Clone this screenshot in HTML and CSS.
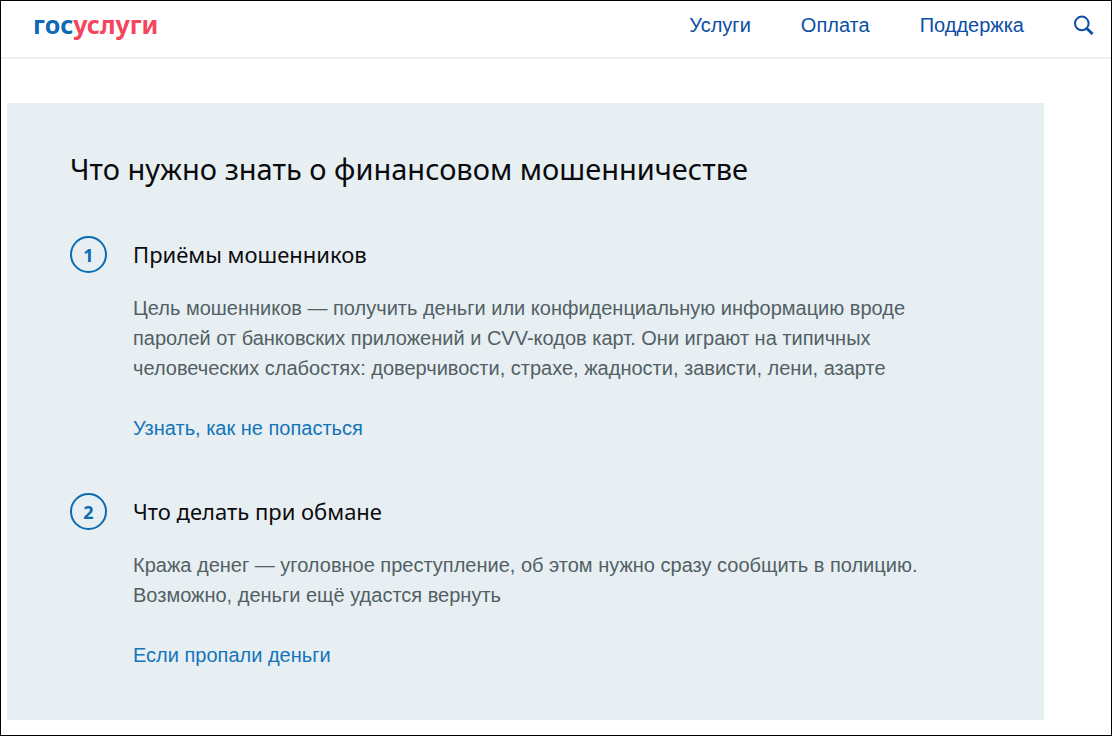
FILE: index.html
```html
<!DOCTYPE html>
<html lang="ru">
<head>
<meta charset="utf-8">
<meta name="viewport" content="width=device-width, initial-scale=1">
<title>Госуслуги</title>
<link rel="stylesheet" href="styles.css">
</head>
<body class="page">
<header class="header">
  <a class="logo" href="#"><span class="logo-blue">гос</span><span class="logo-red">услуги</span></a>
  <nav class="nav">
    <a class="nav-link" href="#">Услуги</a>
    <a class="nav-link" href="#">Оплата</a>
    <a class="nav-link" href="#">Поддержка</a>
    <button class="search" type="button" aria-label="Поиск">
      <svg class="search-icon" viewBox="0 0 20 20" aria-hidden="true"><circle cx="7.8" cy="8.4" r="6.8" fill="none" stroke="currentColor" stroke-width="2"/><path d="M12.6 13.2L18.6 19" fill="none" stroke="currentColor" stroke-width="2.8"/></svg>
    </button>
  </nav>
</header>
<main class="card">
  <h1 class="title">Что нужно знать о финансовом мошенничестве</h1>
  <ol class="steps">
    <li class="step">
      <span class="badge">1</span>
      <div class="content">
        <h2 class="subtitle">Приёмы мошенников</h2>
        <p class="text">Цель мошенников — получить деньги или конфиденциальную информацию вроде паролей от банковских приложений и CVV-кодов карт. Они играют на типичных человеческих слабостях: доверчивости, страхе, жадности, зависти, лени, азарте</p>
        <a class="link" href="#">Узнать, как не попасться</a>
      </div>
    </li>
    <li class="step">
      <span class="badge">2</span>
      <div class="content">
        <h2 class="subtitle">Что делать при обмане</h2>
        <p class="text">Кража денег — уголовное преступление, об этом нужно сразу сообщить в полицию. Возможно, деньги ещё удастся вернуть</p>
        <a class="link" href="#">Если пропали деньги</a>
      </div>
    </li>
  </ol>
</main>
</body>
</html>
```
FILE: styles.css
```css
* { box-sizing: border-box; }

.page {
  margin: 0;
  min-height: 100vh;
  border: 1px solid #000;
  background: #fff;
  font-family: "Liberation Sans", Arial, sans-serif;
  font-size: 20px;
  line-height: 30px;
}

.header {
  display: flex;
  align-items: flex-start;
  justify-content: space-between;
  padding: 9px 17px 17px 32px;
  border-bottom: 2px solid #efeff1;
}

.logo {
  font-family: "Noto Sans", sans-serif;
  font-size: 25px;
  font-weight: 700;
  line-height: 28px;
  text-decoration: none;
}

.logo-blue { color: #0d69b4; }
.logo-red { color: #f5455c; }

.nav {
  display: flex;
  align-items: center;
  gap: 50px;
}

.nav-link {
  color: #0b4ea5;
  text-decoration: none;
}

.search {
  display: flex;
  padding: 0;
  border: 0;
  background: none;
  color: #0b4ea5;
}

.search-icon {
  width: 20px;
  height: 20px;
}

.card {
  margin: 44px 67px 15px 6px;
  padding: 44px 63px 50px;
  background: #e7eff2;
}

.title,
.subtitle {
  margin: 0;
  color: #0b0b0f;
  font-family: "Noto Sans", sans-serif;
  font-weight: 400;
}

.title {
  font-size: 29px;
  line-height: 44px;
}

.steps {
  display: flex;
  flex-direction: column;
  gap: 50px;
  margin: 45px 0 0;
  padding: 0;
  list-style: none;
}

.step {
  display: flex;
  gap: 26px;
}

.badge {
  display: flex;
  flex: none;
  align-items: center;
  justify-content: center;
  width: 37px;
  height: 37px;
  border: 2px solid #0b6bb3;
  border-radius: 50%;
  color: #0b6bb3;
  font-family: "Noto Sans", sans-serif;
  font-size: 18px;
  font-weight: 700;
}

.content { max-width: 800px; }

.subtitle {
  font-size: 22px;
  line-height: 36px;
}

.text {
  margin: 21px 0 30px;
  color: #526065;
}

.link {
  display: block;
  color: #1474ba;
  text-decoration: none;
}
```
